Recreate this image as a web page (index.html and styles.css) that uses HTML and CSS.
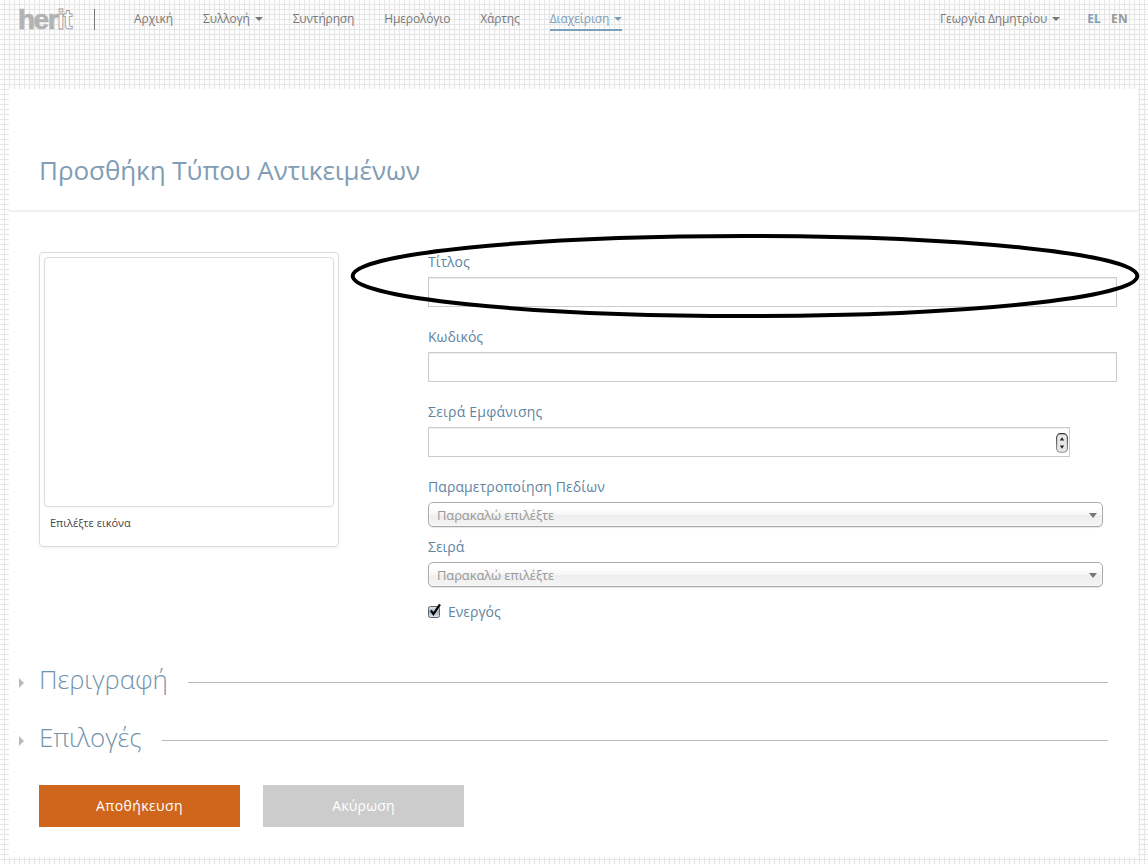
FILE: index.html
```html
<!DOCTYPE html>
<html lang="el">
<head>
<meta charset="utf-8">
<title>herit</title>
<link rel="stylesheet" href="styles.css">
</head>
<body>
<header class="topbar">
  <div class="logo">her<span>it</span></div>
  <span class="divider"></span>
  <nav class="menu">
    <a class="home">Αρχική</a>
    <a>Συλλογή<i class="caret"></i></a>
    <a>Συντήρηση</a>
    <a>Ημερολόγιο</a>
    <a>Χάρτης</a>
    <a class="active">Διαχείριση<i class="caret"></i></a>
  </nav>
  <div class="account"><a>Γεωργία Δημητρίου<i class="caret"></i></a><b class="lang current">EL</b><b class="lang">EN</b></div>
</header>
<main class="panel">
  <h1 class="title">Προσθήκη Τύπου Αντικειμένων</h1>
  <div class="content">
    <div class="card"><div class="photo"></div><p class="caption">Επιλέξτε εικόνα</p></div>
    <form class="fields">
      <div class="field"><label>Τίτλος</label><div class="input"></div></div>
      <div class="field"><label>Κωδικός</label><div class="input"></div></div>
      <div class="field"><label class="order">Σειρά Εμφάνισης</label>
        <div class="input number">
          <svg class="spinner" width="12" height="20" viewBox="0 0 12 20">
            <defs><linearGradient id="edge" x2="0" y2="1"><stop offset="0" stop-color="#333"/><stop offset="1" stop-color="#999"/></linearGradient></defs>
            <rect x=".6" y=".6" width="10.8" height="18.6" rx="4" fill="#e6e6e6" stroke="url(#edge)" stroke-width="1.1"/>
            <path d="M6 4.2L8.2 7.4H3.8ZM6 15.8L8.2 12.6H3.8Z" fill="#222"/>
          </svg>
        </div>
      </div>
      <div class="field compact"><label class="params">Παραμετροποίηση Πεδίων</label><div class="select"><span>Παρακαλώ επιλέξτε</span><i class="arrow"></i></div></div>
      <div class="field compact"><label>Σειρά</label><div class="select"><span>Παρακαλώ επιλέξτε</span><i class="arrow"></i></div></div>
      <div class="check">
        <svg width="14" height="16" viewBox="0 0 14 16">
          <defs><linearGradient id="box" x2="0" y2="1"><stop offset="0" stop-color="#e3e9f0"/><stop offset=".5" stop-color="#a9b5c4"/><stop offset="1" stop-color="#dce8f2"/></linearGradient></defs>
          <rect x=".5" y="3.5" width="11" height="11" rx="2" fill="url(#box)" stroke="#5b626c"/>
          <path d="M2.8 7.4L5.4 11 12 1.4" fill="none" stroke="#000" stroke-width="2.2"/>
        </svg>
        <label>Ενεργός</label>
      </div>
    </form>
  </div>
  <section class="fold"><i class="marker"></i><h2>Περιγραφή</h2><span class="rule"></span></section>
  <section class="fold"><i class="marker"></i><h2>Επιλογές</h2><span class="rule"></span></section>
  <div class="actions"><button class="save">Αποθήκευση</button><button class="cancel">Ακύρωση</button></div>
</main>
<svg class="annotation" width="790" height="86" viewBox="0 0 790 86"><ellipse cx="395" cy="43" rx="392.3" ry="40"/></svg>
</body>
</html>
```
FILE: styles.css
```css
* { box-sizing: border-box; }
body {
  margin: 0;
  height: 864px;
  overflow: hidden;
  position: relative;
  font-family: "Open Sans", "Noto Sans", sans-serif;
  background: repeating-linear-gradient(90deg, transparent 0 4px, #e5e5e5 4px 5px), repeating-linear-gradient(#fdfdfd 0 4px, #e5e5e5 4px 5px);
}
.topbar { display: flex; align-items: flex-start; height: 89px; padding: 0 20px 0 18px; font-size: 12px; line-height: 17px; color: #777; }
.logo { width: 57px; height: 36px; padding-top: 4px; font: bold 28px/32px "Liberation Sans", sans-serif; letter-spacing: -1.5px; white-space: nowrap; color: #b3b3b3; -webkit-text-stroke: .7px #b3b3b3; }
.logo span { color: #fff; -webkit-text-stroke: .8px #999; }
.divider { width: 1px; height: 21px; margin: 9px 39px 0 19px; background: #777; }
.menu { display: flex; gap: 30px; padding-top: 10px; letter-spacing: -.15px; }
.menu a, .account a { display: flex; align-items: center; white-space: nowrap; }
.menu a { height: 21px; padding-bottom: 4px; }
.menu .home { letter-spacing: 0; }
.menu .active { color: #7b9fba; border-bottom: 2px solid #7b9fba; padding-bottom: 2px; letter-spacing: -.1px; }
.caret { margin-left: 5px; border: 4px solid transparent; border-top-color: currentColor; border-bottom: 0; }
.account { display: flex; margin-left: auto; padding-top: 10px; }
.account a { margin-right: 27px; letter-spacing: -.15px; }
.lang { color: #999; margin-left: 10px; letter-spacing: .2px; }
.lang.current { color: #7b9fba; margin-left: 0; }
.panel { height: 768px; margin: 0 10px 0 9px; background: #fff; }
.title { height: 123px; margin: 0; padding: 61px 30px 0; border-bottom: 2px solid #f0f0f0; font-size: 26px; font-weight: 400; line-height: 40px; letter-spacing: -.05px; color: #7f9db5; white-space: nowrap; }
.content { display: flex; height: 438px; padding: 40px 0 0 30px; }
.card { width: 300px; height: 295px; padding: 4px; border: 1px solid #ddd; border-radius: 4px; box-shadow: 0 1px 3px rgba(0,0,0,.06); }
.photo { height: 250px; border: 1px solid #ddd; border-radius: 4px; box-shadow: 0 1px 3px rgba(0,0,0,.05); }
.caption { margin: 8px 6px; font-size: 11px; line-height: 16px; color: #444; }
.fields { width: 689px; margin-left: 89px; font-size: 14px; color: #5f84a2; }
.field { height: 75px; }
.field label { display: block; height: 25px; line-height: 20px; }
.field .order { letter-spacing: .22px; }
.field .params { letter-spacing: .1px; }
.input { height: 30px; background: #fff; border: 1px solid #ccc; box-shadow: inset 0 1px 1px rgba(0,0,0,.075); }
.number { display: flex; align-items: flex-end; justify-content: flex-end; width: 642px; padding: 0 1.5px 3.5px 0; }
.compact { height: 60px; }
.select { display: flex; justify-content: space-between; align-items: center; width: 675px; height: 25px; padding: 0 5px 0 8px; border: 1px solid #aaa; border-radius: 5px; background: linear-gradient(#fff 20%, #f6f6f6 50%, #eee 52%, #f4f4f4); box-shadow: inset 0 0 3px #fff, 0 1px 1px rgba(0,0,0,.1); font-size: 13px; line-height: 24px; letter-spacing: -.12px; color: #999; }
.arrow { margin-top: 1px; border: 4.5px solid transparent; border-top: 5px solid #777; border-bottom: 0; }
.check { display: flex; gap: 6px; line-height: 20px; margin-top: 5px; }
.check svg { margin-top: 1px; }
.fold { display: flex; height: 58px; padding: 9px 30px 0 10px; }
.marker { width: 5px; height: 10px; margin: 19px 15px 0 0; border: 5px solid transparent; border-left: 5px solid #bbb; border-right: 0; }
.fold h2 { margin: 0; font-size: 26px; line-height: 40px; font-weight: 300; letter-spacing: -.08px; color: #7494ad; white-space: nowrap; }
.rule { flex: 1; height: 1px; margin: 23px 0 0 20px; background: #bbb; }
.actions { display: flex; gap: 23px; padding: 19px 30px 0; }
.actions button { width: 201px; height: 42px; padding: 0 0 2px; border: 0; background: #d0661b; color: #fff; font: 14px "Open Sans", sans-serif; letter-spacing: .4px; }
.actions .cancel { background: #ccc; letter-spacing: .2px; }
.annotation { position: absolute; left: 350px; top: 233px; }
.annotation ellipse { fill: none; stroke: #000; stroke-width: 4; }
```
